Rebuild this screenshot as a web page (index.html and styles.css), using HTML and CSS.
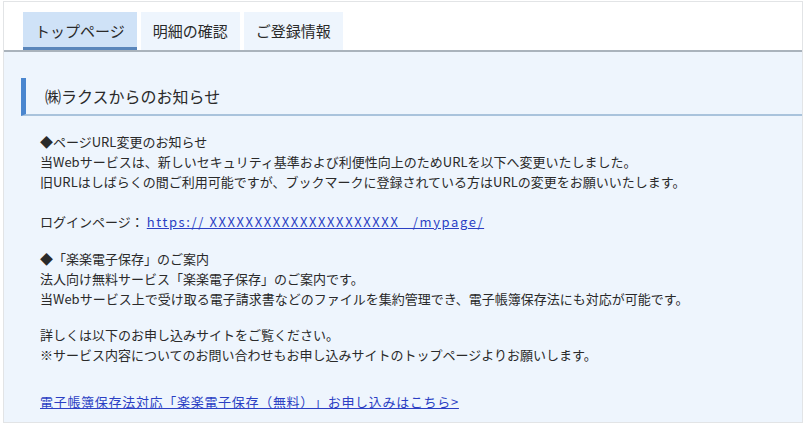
FILE: index.html
```html
<!DOCTYPE html>
<html>
<head>
	<meta charset="utf-8">
	<title>トップページ</title>
	<link rel="stylesheet" href="styles.css">
</head>
<body>
	<div class="frame">
		<ul class="tabs">
			<li class="tab active">トップページ</li>
			<li class="tab">明細の確認</li>
			<li class="tab">ご登録情報</li>
		</ul>

		<div class="content">
			<h2 class="notice-title">㈱ラクスからのお知らせ</h2>

			<div class="notice-body">
				<p>
					◆ページURL変更のお知らせ<br>
					当Webサービスは、新しいセキュリティ基準および利便性向上のためURLを以下へ変更いたしました。<br>
					旧URLはしばらくの間ご利用可能ですが、ブックマークに登録されている方はURLの変更をお願いいたします。
				</p>
				<p class="wide">
					ログインページ：<a class="url" href="#">https:// XXXXXXXXXXXXXXXXXXXXX _/mypage/</a>
				</p>
				<p>
					◆「楽楽電子保存」のご案内<br>
					法人向け無料サービス「楽楽電子保存」のご案内です。<br>
					当Webサービス上で受け取る電子請求書などのファイルを集約管理でき、電子帳簿保存法にも対応が可能です。
				</p>
				<p class="tight">
					詳しくは以下のお申し込みサイトをご覧ください。<br>
					※サービス内容についてのお問い合わせもお申し込みサイトのトップページよりお願いします。
				</p>
				<p class="last">
					<a class="apply" href="#">電子帳簿保存法対応「楽楽電子保存（無料）」お申し込みはこちら&gt;</a>
				</p>
			</div>
		</div>
	</div>
</body>
</html>
```

FILE: styles.css
```css
body {
	margin: 0;
	background: #fff;
	font-family: "Noto Sans CJK JP", "Noto Sans", sans-serif;
	color: #2a2a2a;
	text-spacing-trim: space-all;
}
.frame {
	width: 798px;
	margin: 1px 0 0 3px;
	border: 1px solid #e2e4e6;
	background: #fff;
}

/* tab bar */
.tabs {
	display: flex;
	gap: 4px;
	margin: 0;
	padding: 10px 0 0 19px;
	list-style: none;
	border-bottom: 2px solid #aab3bc;
}
.tab {
	height: 38px;
	padding: 0 12px;
	line-height: 38px;
	font-size: 15px;
	background: #eef5fd;
	color: #2a2a2a;
}
.tab.active {
	height: 35px;
	background: #cfe2f7;
	border-bottom: 3px solid #5a86bb;
	line-height: 37px;
}

/* notice area */
.content {
	background: #eef5fd;
	padding: 26px 0 1px 17px;
}
.notice-title {
	margin: 0;
	height: 36px;
	padding-left: 19px;
	border-left: 5px solid #4a86cf;
	border-bottom: 2px solid #a9c3dc;
	font-size: 16px;
	font-weight: normal;
	line-height: 36px;
	color: #2a2a2a;
}
.notice-body {
	padding: 16px 0 0 19px;
	font-size: 13px;
	line-height: 20px;
}
.notice-body p {
	margin: 0 0 17px;
}
.notice-body p.wide {
	margin-top: 20px;
}
.notice-body p.tight {
	margin-top: -1px;
}
.notice-body p.last {
	margin-top: 27px;
	margin-bottom: 9px;
}
.notice-body a {
	color: #2b3fc4;
	text-decoration: underline;
}
.notice-body a.url {
	margin-left: 3px;
	letter-spacing: 1.6px;
}
.notice-body a.apply {
	letter-spacing: 0.7px;
}
```
